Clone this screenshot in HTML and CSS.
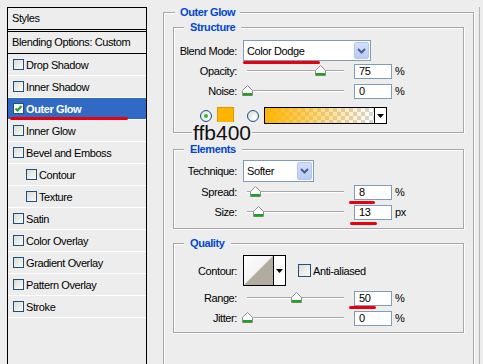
FILE: index.html
```html
<!DOCTYPE html>
<html lang="en">
<head>
  <meta charset="UTF-8">
  <title>Layer Style - Outer Glow</title>
  <link rel="stylesheet" href="styles.css">
</head>
<body>
<div class="dialog">

  <!-- Styles list -->
  <div class="styles-panel">
    <div class="panel-head">Styles</div>
    <div class="panel-blend">Blending Options: Custom</div>
    <ul class="style-list">
      <li><span class="cb"></span>Drop Shadow</li>
      <li><span class="cb"></span>Inner Shadow</li>
      <li class="active">
        <span class="cb checked"><svg width="9" height="9" viewBox="0 0 9 9"><path d="M1.5 4.5 L3.5 6.5 L7.5 2" fill="none" stroke="#21a121" stroke-width="2"/></svg></span>Outer Glow
        <span class="mark mark-list"></span>
      </li>
      <li><span class="cb"></span>Inner Glow</li>
      <li><span class="cb"></span>Bevel and Emboss</li>
      <li class="sub"><span class="cb"></span>Contour</li>
      <li class="sub"><span class="cb"></span>Texture</li>
      <li><span class="cb"></span>Satin</li>
      <li><span class="cb"></span>Color Overlay</li>
      <li><span class="cb"></span>Gradient Overlay</li>
      <li><span class="cb"></span>Pattern Overlay</li>
      <li><span class="cb"></span>Stroke</li>
    </ul>
  </div>

  <!-- Outer Glow settings -->
  <fieldset class="group outer">
    <legend>Outer Glow</legend>

    <fieldset class="group box structure">
      <legend>Structure</legend>
      <div class="row row-select">
        <span class="label">Blend Mode:</span>
        <div class="select blend-select">
          <span>Color Dodge</span>
          <span class="arrow"><svg width="9" height="6" viewBox="0 0 9 6"><path d="M1 1 L4.5 4.5 L8 1" fill="none" stroke="#4d6185" stroke-width="2"/></svg></span>
          <span class="mark mark-blend"></span>
        </div>
      </div>
      <div class="row">
        <span class="label">Opacity:</span>
        <div class="slider"><div class="track"><span class="thumb" style="left: 75%"><svg width="11" height="11" viewBox="0 0 11 11"><path d="M5.5 0.5 L10.5 5.5 V10.5 H0.5 V5.5 Z" fill="#fff" stroke="#8c8c8c"/><rect x="1" y="8" width="9" height="2.5" fill="#21a121"/></svg></span></div></div>
        <span class="field"><input type="text" value="75" readonly></span>
        <span class="unit">%</span>
      </div>
      <div class="row">
        <span class="label">Noise:</span>
        <div class="slider"><div class="track"><span class="thumb" style="left: 0%"><svg width="11" height="11" viewBox="0 0 11 11"><path d="M5.5 0.5 L10.5 5.5 V10.5 H0.5 V5.5 Z" fill="#fff" stroke="#8c8c8c"/><rect x="1" y="8" width="9" height="2.5" fill="#21a121"/></svg></span></div></div>
        <span class="field"><input type="text" value="0" readonly></span>
        <span class="unit">%</span>
      </div>
      <div class="radio-row">
        <span class="radio on"></span>
        <span class="swatch"></span>
        <span class="radio"></span>
        <div class="gradient">
          <span class="gradient-fill"></span>
          <span class="small-arrow"><svg width="7" height="4" viewBox="0 0 7 4"><path d="M0 0 H7 L3.5 4 Z" fill="#000"/></svg></span>
        </div>
        <span class="note">ffb400</span>
      </div>
    </fieldset>

    <fieldset class="group box elements">
      <legend>Elements</legend>
      <div class="row row-select">
        <span class="label">Technique:</span>
        <div class="select technique-select">
          <span>Softer</span>
          <span class="arrow"><svg width="9" height="6" viewBox="0 0 9 6"><path d="M1 1 L4.5 4.5 L8 1" fill="none" stroke="#4d6185" stroke-width="2"/></svg></span>
        </div>
      </div>
      <div class="row">
        <span class="label">Spread:</span>
        <div class="slider"><div class="track"><span class="thumb" style="left: 8%"><svg width="11" height="11" viewBox="0 0 11 11"><path d="M5.5 0.5 L10.5 5.5 V10.5 H0.5 V5.5 Z" fill="#fff" stroke="#8c8c8c"/><rect x="1" y="8" width="9" height="2.5" fill="#21a121"/></svg></span></div></div>
        <span class="field"><input type="text" value="8" readonly><span class="mark mark-spread"></span></span>
        <span class="unit">%</span>
      </div>
      <div class="row">
        <span class="label">Size:</span>
        <div class="slider"><div class="track"><span class="thumb" style="left: 11%"><svg width="11" height="11" viewBox="0 0 11 11"><path d="M5.5 0.5 L10.5 5.5 V10.5 H0.5 V5.5 Z" fill="#fff" stroke="#8c8c8c"/><rect x="1" y="8" width="9" height="2.5" fill="#21a121"/></svg></span></div></div>
        <span class="field"><input type="text" value="13" readonly><span class="mark mark-size"></span></span>
        <span class="unit">px</span>
      </div>
    </fieldset>

    <fieldset class="group box quality">
      <legend>Quality</legend>
      <div class="row row-contour">
        <span class="label">Contour:</span>
        <div class="contour">
          <svg class="contour-curve" width="29" height="29" viewBox="0 0 29 29">
            <defs>
              <linearGradient id="cbg" x1="0" y1="0" x2="1" y2="1">
                <stop offset="0" stop-color="#ffffff"/>
                <stop offset="1" stop-color="#e6e6e6"/>
              </linearGradient>
            </defs>
            <rect width="29" height="29" fill="url(#cbg)"/>
            <polygon points="0,29 29,0 29,29" fill="#b1ac9f"/>
          </svg>
          <span class="small-arrow"><svg width="7" height="4" viewBox="0 0 7 4"><path d="M0 0 H7 L3.5 4 Z" fill="#000"/></svg></span>
        </div>
        <span class="cb big"></span>
        <span class="check-label">Anti-aliased</span>
      </div>
      <div class="row row-range">
        <span class="label">Range:</span>
        <div class="slider"><div class="track"><span class="thumb" style="left: 51%"><svg width="11" height="11" viewBox="0 0 11 11"><path d="M5.5 0.5 L10.5 5.5 V10.5 H0.5 V5.5 Z" fill="#fff" stroke="#8c8c8c"/><rect x="1" y="8" width="9" height="2.5" fill="#21a121"/></svg></span></div></div>
        <span class="field"><input type="text" value="50" readonly><span class="mark mark-range"></span></span>
        <span class="unit">%</span>
      </div>
      <div class="row">
        <span class="label">Jitter:</span>
        <div class="slider"><div class="track"><span class="thumb" style="left: 0%"><svg width="11" height="11" viewBox="0 0 11 11"><path d="M5.5 0.5 L10.5 5.5 V10.5 H0.5 V5.5 Z" fill="#fff" stroke="#8c8c8c"/><rect x="1" y="8" width="9" height="2.5" fill="#21a121"/></svg></span></div></div>
        <span class="field"><input type="text" value="0" readonly></span>
        <span class="unit">%</span>
      </div>
    </fieldset>
  </fieldset>

  <div class="edge"></div>
</div>
</body>
</html>
```

FILE: styles.css
```css
* {
  box-sizing: border-box;
}

body {
  margin: 0;
  background: #ededed;
  font-family: "Liberation Sans", Arial, sans-serif;
  font-size: 11px;
  letter-spacing: -0.4px;
  color: #000;
  overflow: hidden;
}

.dialog {
  display: flex;
  align-items: flex-start;
  height: 364px;
  padding: 7px 0 0 7px;
  overflow: hidden;
}

/* Styles list */
.styles-panel {
  flex: none;
  width: 140px;
  height: 357px;
  border: 1px solid #000;
  border-bottom: none;
}

.panel-head {
  height: 22px;
  line-height: 21px;
  padding-left: 4px;
  border-bottom: 1px solid #000;
}

.panel-blend {
  margin-top: 1px;
  height: 23px;
  line-height: 21px;
  padding-left: 4px;
  border-top: 1px solid #000;
  border-bottom: 1px solid #000;
}

.style-list {
  list-style: none;
  margin: 0;
  padding: 0;
}

.style-list li {
  position: relative;
  display: flex;
  align-items: center;
  gap: 2px;
  height: 22px;
  padding-left: 5px;
  border-bottom: 1px solid #fff;
}

.style-list li.sub {
  padding-left: 18px;
}

.style-list li.active {
  background: #316ac5;
  color: #fff;
  font-weight: bold;
}

.cb {
  flex: none;
  display: grid;
  place-items: center;
  width: 11px;
  height: 11px;
  border: 1px solid #1c5180;
  background: linear-gradient(135deg, #dcdcd4, #fbfbf9);
}

.cb.checked {
  background: #fff;
}

.cb.big {
  width: 13px;
  height: 13px;
  margin-left: 12px;
}

/* hand drawn red underlines */
.mark {
  position: absolute;
  height: 3px;
  border-radius: 2px;
  background: #e8000f;
}

.mark-list {
  left: 2px;
  top: 19px;
  width: 118px;
}

.mark-blend {
  left: -1px;
  top: 20px;
  width: 77px;
}

.mark-spread {
  left: -5px;
  top: 16px;
  width: 26px;
}

.mark-size {
  left: -4px;
  top: 17px;
  width: 27px;
}

.mark-range {
  left: -5px;
  top: 15px;
  width: 27px;
}

/* group boxes */
.group {
  min-width: 0;
  margin: 0;
  border: 1px solid #a7a6aa;
  box-shadow: inset 1px 1px 0 #fff, 1px 1px 0 #fff;
}

.group legend {
  line-height: 12px;
  font-weight: bold;
  color: #0046d5;
  background: #ededed;
}

.outer {
  flex: none;
  width: 311px;
  height: 358px;
  margin: -1px 0 0 16px;
  padding: 0 9px;
  border-bottom: none;
}

.outer > legend {
  margin-left: 2px;
  padding: 0 5px;
}

.box {
  position: relative;
  width: 291px;
  padding: 0;
}

.box > legend {
  margin-left: 10px;
  padding: 0 6px;
}

.structure {
  margin-top: 3px;
  padding: 7px 0 8px;
}

.elements {
  margin-top: 10px;
  padding: 5px 0 6px;
}

.quality {
  margin-top: 8px;
  padding: 6px 0 4px;
}

/* rows */
.row {
  display: flex;
  align-items: center;
  height: 20px;
}

.row-select {
  height: 21px;
}

.elements .row-select {
  height: 22px;
}

.row-contour {
  height: 31px;
}

.row-range {
  margin-top: 2px;
}

.label {
  flex: none;
  width: 63px;
  margin-right: 6px;
  text-align: right;
}

.select {
  position: relative;
  display: flex;
  align-items: center;
  height: 100%;
  padding-left: 3px;
  border: 1px solid #7f9db9;
  background: #fff;
}

.blend-select {
  width: 128px;
}

.technique-select {
  width: 71px;
}

.select .arrow {
  display: grid;
  place-items: center;
  width: 15px;
  height: calc(100% - 2px);
  margin-left: auto;
  margin-right: 1px;
  border: 1px solid #b4c6f0;
  border-radius: 2px;
  background: linear-gradient(#d3defc, #b8cbf8);
}

.slider {
  flex: none;
  width: 105px;
  height: 20px;
  margin-right: 6px;
  padding: 0 4px;
}

.track {
  position: relative;
  top: 9px;
  height: 2px;
  border-top: 1px solid #a7a6aa;
  border-bottom: 1px solid #fff;
}

.thumb {
  position: absolute;
  top: -6px;
  width: 11px;
  height: 11px;
  margin-left: -5px;
}

.thumb svg {
  display: block;
}

.field {
  position: relative;
  flex: none;
  width: 38px;
  height: 15px;
}

.field input {
  width: 100%;
  height: 100%;
  margin: 0;
  padding: 0 4px;
  border: 1px solid #7f9db9;
  background: #fff;
  font: inherit;
  letter-spacing: inherit;
  color: #000;
  outline: none;
}

.unit {
  margin-left: 3px;
}

/* colour pick row */
.radio-row {
  position: relative;
  display: flex;
  align-items: center;
  height: 17px;
  margin-top: 6px;
  padding-left: 26px;
}

.radio {
  position: relative;
  flex: none;
  width: 12px;
  height: 12px;
  border: 1px solid #1c5180;
  border-radius: 50%;
  background: radial-gradient(circle at 65% 65%, #fff, #d8d8d0);
}

.radio.on::after {
  content: "";
  position: absolute;
  left: 3px;
  top: 3px;
  width: 4px;
  height: 4px;
  border-radius: 50%;
  background: #31b331;
}

.swatch {
  flex: none;
  width: 17px;
  height: 17px;
  margin: 0 13px 0 5px;
  border: 1px solid #d79a00;
  background: #ffb400;
}

.gradient {
  display: flex;
  width: 123px;
  height: 17px;
  margin-left: 5px;
  border: 1px solid #000;
}

.gradient-fill {
  flex: 1;
  background:
    linear-gradient(to right, #ffb400, rgba(255, 180, 0, 0)),
    repeating-conic-gradient(#d6d6d6 0 25%, #fff 0 50%) 0 0 / 8px 8px;
}

.small-arrow {
  display: grid;
  place-items: center;
  width: 12px;
  border-left: 1px solid #000;
  background: #fff;
}

.note {
  position: absolute;
  left: 18px;
  top: 15px;
  padding: 0 1px;
  font-size: 21px;
  line-height: 21px;
  letter-spacing: 0;
  color: #111;
  background: #ededed;
}

/* contour picker */
.contour {
  display: flex;
  width: 43px;
  height: 31px;
  border: 1px solid #000;
  background: #fff;
}

.contour-curve {
  display: block;
}

.contour .small-arrow {
  width: 12px;
}

.check-label {
  margin-left: 2px;
}

.edge {
  flex: none;
  width: 1px;
  height: 357px;
  margin-left: 5px;
  background: #b5b4b8;
}
```
